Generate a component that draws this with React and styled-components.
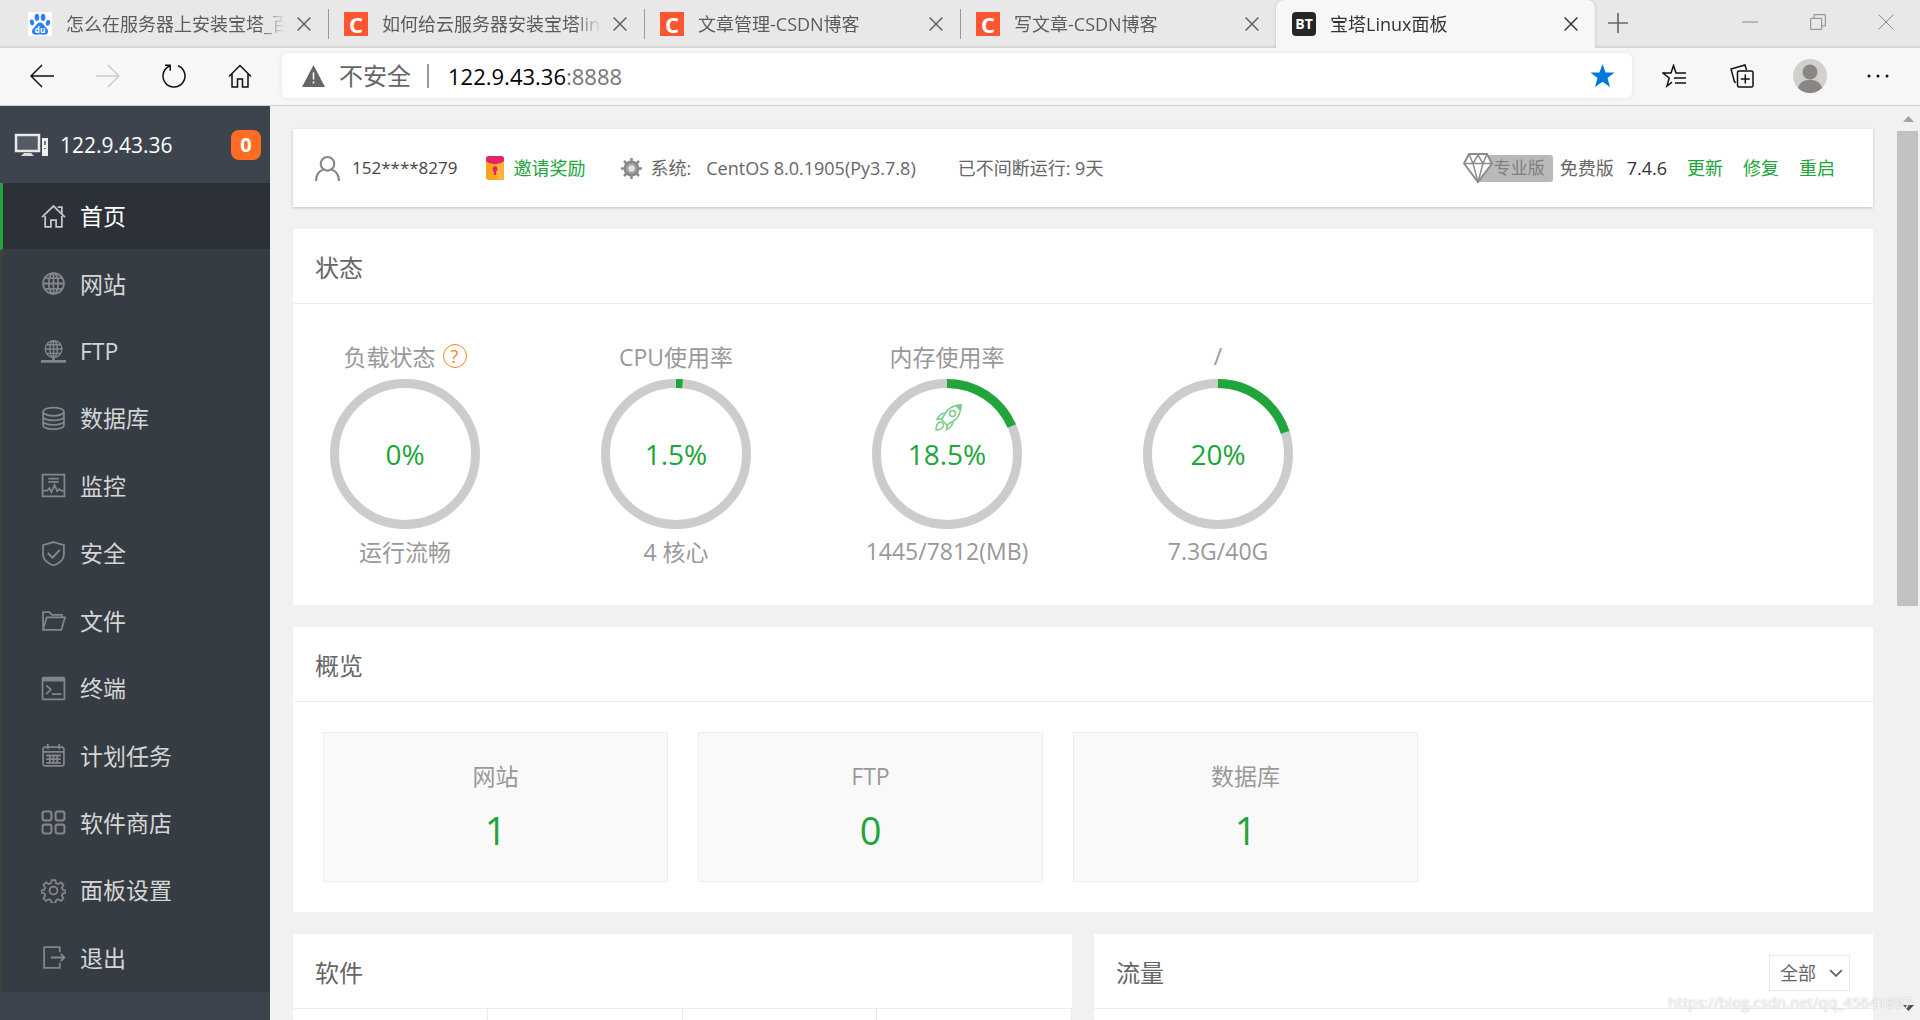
import React from "react";
import styled, {createGlobalStyle} from "styled-components";

const GlobalStyle = createGlobalStyle`
  * { box-sizing: border-box; }
  body {
    margin: 0;
    overflow: hidden;
    background: #f1f1f1;
    color: #666;
    font-family: "Open Sans", "Noto Sans CJK SC", sans-serif;
    font-size: 18px;
  }
  button {
    border: 0;
    padding: 0;
    background: none;
    color: inherit;
    font: inherit;
    cursor: pointer;
  }
  a { text-decoration: none; }
  h2, ul { margin: 0; padding: 0; }
  svg { display: block; }
`

/* ---------- browser window ---------- */

const Window = styled.div`
  display: flex;
  flex-direction: column;
  height: 100vh;
`

const TabStrip = styled.div`
  display: flex;
  flex: none;
  height: 48px;
  padding-left: 12px;
  background: #e8e8e8;
  box-shadow: inset 0 -3px 2px -1px #d6d6d6;
`

const Tab = styled.div`
  display: flex;
  align-items: center;
  flex: 0 1 ${props => props.$active ? '319px' : '316px'};
  min-width: 0;
  padding-right: 12px;
  background: ${props => props.$active ? '#f7f7f7' : 'transparent'};
  border-radius: 8px 8px 0 0;
  box-shadow: ${props => props.$active ? '0 0 3px #bbb' : 'none'};
  clip-path: inset(0 -4px 0 -4px);
  color: ${props => props.$active ? '#333' : '#5c5c5c'};
`

const Divider = styled.span`
  flex: none;
  width: 1px;
  height: 30px;
  margin-right: 15px;
  background: ${props => props.$hidden ? 'transparent' : '#999'};
`

const TabTitle = styled.span`
  flex: 1;
  margin-left: 14px;
  white-space: nowrap;
  line-height: 24px;
  mask-image: linear-gradient(to right, #000 86%, transparent 97%);
`

const TabClose = styled.button`
  display: grid;
  place-items: center;
  flex: none;
  width: 24px;
  height: 24px;
`

const Favicon = styled.span`
  display: grid;
  place-items: center;
  flex: none;
  width: 24px;
  height: 24px;
  border-radius: ${props => props.$round ? '4px' : '0'};
  background: ${props => props.$bg};
  color: #fff;
  font-size: ${props => props.$size};
  font-weight: 700;
  line-height: 24px;
`

const NewTab = styled.button`
  display: grid;
  place-items: center;
  width: 46px;
  height: 46px;
`

const WindowButtons = styled.div`
  display: flex;
  margin-left: auto;
  color: #888;
`

const WindowButton = styled.button`
  display: grid;
  place-items: center;
  width: 68px;
  height: 43px;
`

const Toolbar = styled.div`
  display: flex;
  align-items: center;
  flex: none;
  height: 58px;
  padding: 0 8px 2px 9px;
  background: #f7f7f7;
  border-bottom: 1px solid #cfcfcf;
`

const ToolButton = styled.button`
  display: grid;
  place-items: center;
  flex: none;
  width: ${props => props.$wide ? '68px' : '66px'};
  height: 44px;
  color: ${props => props.$off ? '#ccc' : '#111'};
`

const AddressBar = styled.div`
  display: flex;
  align-items: center;
  flex: 1;
  height: 45px;
  margin: 0 8px 0 9px;
  padding: 0 17px 0 20px;
  background: #fff;
  border-radius: 6px;
  box-shadow: 0 0 5px #e4e4e4;
  color: #666;
  font-size: 24px;
  line-height: 32px;
`

const Insecure = styled.span`
  margin-left: 14px;
`

const AddressRule = styled.span`
  width: 2px;
  height: 24px;
  margin: 0 19px 0 16px;
  background: #999;
`

const Url = styled.span`
  flex: 1;
  color: #757575;
  font-size: 22px;

  b {
    color: #000;
    font-weight: 400;
  }
`

/* ---------- panel ---------- */

const Page = styled.div`
  display: flex;
  flex: 1;
  min-height: 0;
`

const Sidebar = styled.aside`
  flex: none;
  width: 270px;
  overflow: hidden;
  background: #3d444d;
`

const Server = styled.div`
  display: flex;
  align-items: center;
  gap: 11px;
  height: 77px;
  padding: 0 9px 0 14px;
  color: #fff;
  font-size: 21px;
`

const Badge = styled.span`
  width: 30px;
  margin-left: auto;
  border-radius: 8px;
  background: #ff6c24;
  font-size: 20px;
  font-weight: 700;
  line-height: 30px;
  text-align: center;
`

const Menu = styled.ul`
  display: grid;
  grid-auto-rows: 1fr;
  height: 809px;
  list-style: none;
  background: #353c43;
`

const MenuItem = styled.li`
  border-left: 3px solid ${props => props.$active ? '#20a53a' : '#403f40'};
  border-bottom: 1px solid #353c43;
  background: ${props => props.$active ? '#2c3138' : '#353c43'};

  a {
    display: flex;
    align-items: center;
    gap: 14px;
    height: 100%;
    padding-left: 38px;
    color: ${props => props.$active ? '#fff' : '#d5d5d5'};
    font-size: 23px;
    line-height: 32px;
  }
  svg { color: ${props => props.$active ? '#c4c6c8' : '#83878b'}; }
`

const Main = styled.main`
  flex: 1;
  min-width: 0;
  overflow: hidden;
  padding: 23px;
`

const InfoBar = styled.header`
  display: flex;
  align-items: center;
  height: 78px;
  margin-bottom: 22px;
  padding: 0 38px 0 22px;
  background: #fff;
  box-shadow: 0 1px 3px rgba(0, 0, 0, .2);
  white-space: nowrap;
  line-height: 24px;

  a { color: #20a53a; }
`

const Account = styled.span`
  margin: 0 28px 0 12px;
  color: #444;
  font-size: 17px;
`

const Invite = styled.a`
  margin: 0 35px 0 10px;
`

const SystemLabel = styled.span`
  margin: 0 15px 0 9px;
`

const SystemName = styled.span`
  margin-right: 42px;
`

const Version = styled.div`
  display: flex;
  align-items: center;
  gap: 20px;
  margin-left: auto;
`

const Edition = styled.span`
  display: flex;
  align-items: center;
  gap: 7px;
`

const ProBadge = styled.span`
  display: flex;
  align-items: center;
  svg { z-index: 1; }
`

const ProLabel = styled.span`
  height: 27px;
  margin-left: -15px;
  padding: 0 8px 0 16px;
  border-radius: 3px;
  background: #b9b9b9;
  color: #808080;
  font-size: 17px;
  line-height: 26px;
`

const VersionNumber = styled.span`
  margin-left: 6px;
  color: #333;
`

const Card = styled.section`
  margin-bottom: ${props => props.$last ? '0' : '22px'};
  background: #fff;
`

const CardHead = styled.div`
  display: flex;
  align-items: center;
  justify-content: space-between;
  height: 75px;
  padding: 4px 23px 0 22px;
  border-bottom: 1px solid #ededed;
`

const CardTitle = styled.h2`
  font-size: 24px;
  font-weight: 400;
  line-height: 32px;
`

const Gauges = styled.div`
  display: flex;
  gap: 121px;
  padding: 30px 37px 31px;
`

const Gauge = styled.div`
  display: flex;
  flex-direction: column;
  align-items: center;
  width: 150px;
  color: #999;
  font-size: 23px;
  white-space: nowrap;
`

const GaugeText = styled.div`
  display: flex;
  align-items: center;
  gap: 7px;
  height: 45px;
  padding-bottom: 2px;
`

const Help = styled.button`
  width: 24px;
  height: 24px;
  border: 1px solid #ff7f1a;
  border-radius: 50%;
  color: #ff7f1a;
  font-size: 18px;
  line-height: 22px;
`

const Ring = styled.div`
  position: relative;
  display: grid;
  place-items: center;
  width: 150px;
  height: 150px;

  > svg, > span { grid-area: 1 / 1; }
`

const Percent = styled.span`
  color: #20a53a;
  font-size: 28px;
`

const RocketButton = styled.button`
  position: absolute;
  top: 25px;
  left: 63px;
`

const Stats = styled.div`
  display: flex;
  gap: 30px;
  padding: 30px;
`

const Stat = styled.a`
  display: flex;
  flex-direction: column;
  align-items: center;
  width: 345px;
  height: 150px;
  padding-top: 26px;
  border: 1px solid #eee;
  background: #f9f9f9;
`

const StatName = styled.span`
  color: #999;
  font-size: 23px;
  line-height: 34px;
`

const StatValue = styled.span`
  margin-top: 9px;
  color: #20a53a;
  font-size: 38px;
  line-height: 56px;
`

const Columns = styled.div`
  display: grid;
  grid-template-columns: 1fr 1fr;
  gap: 22px;
`

const SoftGrid = styled.div`
  display: grid;
  grid-template-columns: repeat(4, 1fr);
`

const SoftCell = styled.div`
  height: 168px;
  border-right: 1px solid #e6e6f4;
  border-bottom: 1px solid #e6e6f4;
`

const Chart = styled.div`
  height: 500px;
`

const SelectBox = styled.div`
  display: grid;
  align-items: center;
  width: 81px;
  height: 36px;
  border: 1px solid #e8e8e8;

  > * { grid-area: 1 / 1; }
  svg {
    justify-self: end;
    margin-right: 6px;
    pointer-events: none;
  }
`

const Select = styled.select`
  appearance: none;
  width: 100%;
  height: 34px;
  padding: 0 10px;
  border: 0;
  background: none;
  color: #666;
  font: inherit;
`

const ScrollBar = styled.div`
  display: flex;
  flex-direction: column;
  flex: none;
  width: 24px;
  background: #f1f1f1;
`

const ScrollArrow = styled.button`
  display: grid;
  place-items: center;
  height: 25px;
  color: ${props => props.$dark ? '#505050' : '#a3a3a3'};
`

const ScrollTrack = styled.div`
  flex: 1;
  padding: 0 2px 0 1px;
`

const ScrollThumb = styled.div`
  height: 55%;
  background: #c1c1c1;
`

const Watermark = styled.span`
  position: fixed;
  right: 8px;
  bottom: 6px;
  color: #f2f2f2;
  font-size: 15px;
  line-height: 24px;
  text-shadow: 0 0 2px #bbb;
  pointer-events: none;
`

/* ---------- icons ---------- */

const Icon = ({size = 24, width = 1.5, children}) => (
  <svg width={size} height={size} viewBox="0 0 24 24" fill="none" stroke="currentColor" strokeWidth={width} aria-hidden="true">
    {children}
  </svg>
)

const CrossIcon = ({size = 14, width = 2.4}) => (
  <Icon size={size} width={width}><path d="M1 1l22 22M23 1L1 23"/></Icon>
)

const BaiduIcon = () => (
  <svg width="24" height="24" viewBox="0 0 24 24" fill="#2b80ff">
    <ellipse cx="8.9" cy="5.3" rx="2.3" ry="3.6"/>
    <ellipse cx="15.1" cy="5.3" rx="2.3" ry="3.6"/>
    <ellipse cx="4" cy="10.4" rx="2.1" ry="3" transform="rotate(-15 4 10.4)"/>
    <ellipse cx="20" cy="10.8" rx="2.1" ry="3" transform="rotate(15 20 10.8)"/>
    <path d="M12 10.5c2.4 0 3.4 2.2 5 4 1.7 1.7 3.4 3 3 5.5-.4 2.3-2.3 3-4.500 2.700-2.400-.3-4.600-.3-7 0-2.300.3-4.200-.5-4.500-2.700-.3-2.500 1.400-3.800 3-5.500 1.700-1.800 2.600-4 5-4z"/>
    <text x="12" y="21" fill="#fff" fontSize="8" fontWeight="700" textAnchor="middle">du</text>
  </svg>
)

const globe = (
  <>
    <ellipse cx="12" cy="12" rx="4.5" ry="10"/>
    <path d="M12 2v20M2 12h20M3.8 6.800h16.400M3.800 17.200h16.400"/>
  </>
)

const menu = [
  {name: '首页', icon: <><path d="M1 12.500L12 2l11 10.500"/><path d="M4 11.500V22h5.500v-6.500h5V22H20V11.500M16 3h4v6"/></>},
  {name: '网站', icon: <><circle cx="12" cy="12" r="10"/>{globe}</>},
  {name: 'FTP', icon: <><g transform="translate(2.500 0) scale(.8)"><circle cx="12" cy="12" r="10"/>{globe}</g><path d="M0 21.500h24M9 21.500h6M12 18v3" strokeWidth="2.500"/></>},
  {name: '数据库', icon: <><ellipse cx="12" cy="5.500" rx="10" ry="4"/><path d="M2 5.500v13c0 5 20 5 20 0v-13M2 10c0 5 20 5 20 0M2 14.300c0 5 20 5 20 0"/></>},
  {name: '监控', icon: <><path d="M1.500 1.500h21v21h-21zM7 5.500h10M7 8.500h10"/><path d="M2 17h4l2-2.500 2 4 3-7 2.500 6 2-2 2 1.500h3"/></>},
  {name: '安全', icon: <><path d="M12 1l10 3v9c0 5-4.500 8.500-10 10.500C6.500 21.500 2 18 2 13V4z"/><path d="M6.500 11.500l4.500 4.500 7-7.500" strokeWidth="2"/></>},
  {name: '文件', icon: <path d="M2 21V4h6l2.500 2.500h9.500V9M2 21l3.500-12h17.500l-3.500 12z"/>},
  {name: '终端', icon: <><rect x="1.500" y="1.500" width="21" height="21" rx="1"/><path d="M2 3.500h20" strokeWidth="3.500"/><path d="M5 9l4.500 4-4.500 4.500M10.500 17.500h9"/></>},
  {name: '计划任务', icon: <><rect x="2" y="4" width="20" height="18" rx="2"/><path d="M6.500 1v5M17.500 1v5M2 8.500h20M5 12h14M5 15.500h14M5 19h14M8.500 11v9M12 11v9M15.500 11v9"/></>},
  {name: '软件商店', icon: <g strokeWidth="2"><rect x="1.500" y="1.500" width="8.500" height="8.500" rx="2"/><rect x="14" y="1.500" width="8.500" height="8.500" rx="2"/><rect x="1.500" y="14" width="8.500" height="8.500" rx="2"/><rect x="14" y="14" width="8.500" height="8.500" rx="2"/></g>},
  {name: '面板设置', icon: <><circle cx="12" cy="12" r="3.800"/><path d="M10.300 2h3.400l.8 3 2 .8 2.700-1.600 2.400 2.400-1.600 2.700.8 2 3 .8v2l-3 .8-.8 2 1.600 2.700-2.400 2.400-2.700-1.600-2 .8-.8 2.900h-3.400l-.8-2.900-2-.8-2.700 1.600-2.400-2.400L4 16.900l-.8-2-2.700-.8v-2l2.700-.8.8-2-1.600-2.700 2.400-2.400 2.700 1.600 2-.8z"/></>},
  {name: '退出', icon: <path d="M18 7V2H3v20h15v-5M9.500 12h13M19 8.500l3.500 3.500-3.500 3.500"/>},
]

const tabs = [
  {title: '怎么在服务器上安装宝塔_百', icon: <Favicon $bg="#fff"><BaiduIcon/></Favicon>},
  {title: '如何给云服务器安装宝塔lin', icon: <Favicon $bg="#fc5531" $size="22px">C</Favicon>, line: true},
  {title: '文章管理-CSDN博客', icon: <Favicon $bg="#fc5531" $size="22px">C</Favicon>, line: true},
  {title: '写文章-CSDN博客', icon: <Favicon $bg="#fc5531" $size="22px">C</Favicon>, line: true},
  {title: '宝塔Linux面板', icon: <Favicon $bg="#262626" $size="14px" $round>BT</Favicon>, active: true},
]

const gauges = [
  {name: '负载状态', value: 0, note: '运行流畅', help: true},
  {name: 'CPU使用率', value: 1.5, note: '4 核心'},
  {name: '内存使用率', value: 18.5, note: '1445/7812(MB)', rocket: true},
  {name: '/', value: 20, note: '7.3G/40G'},
]

const stats = [
  {name: '网站', value: 1},
  {name: 'FTP', value: 0},
  {name: '数据库', value: 1},
]

const Rocket = () => (
  <svg width="27" height="27" viewBox="0 0 27 27" fill="none" stroke="#7ccb8b" strokeWidth="1.500">
    <path d="M26 1c-7 0-12 2.500-15.500 8L6.500 15.500l5.500 5.500 6.500-4C24 13.500 26 8 26 1z"/>
    <path d="M21 1.800L26 1l-.8 5z" fill="#7ccb8b"/>
    <circle cx="17.500" cy="9.500" r="3"/>
    <path d="M10.500 9C6 9 4 11 2 15.500l5-1M18 17c0 4-2 6.500-6.500 8.500l1-5"/>
    <path d="M1 26c0-4 1-6.500 3.500-8 2.500-.5 4.500 1.500 4 4C7.500 24.500 5 26 1 26z"/>
  </svg>
)

const GaugeRing = ({value}) => (
  <svg width="150" height="150" viewBox="0 0 150 150" fill="none" strokeWidth="9">
    <circle cx="75" cy="75" r="70.500" stroke="#ccc"/>
    {value > 0 &&
      <circle
        cx="75"
        cy="75"
        r="70.500"
        stroke="#20a53a"
        pathLength="100"
        strokeDasharray={`${value} 100`}
        transform="rotate(-90 75 75)"
      />
    }
  </svg>
)

const Browser = () => (
  <>
    <TabStrip>
      {tabs.map(tab => (
        <Tab key={tab.title} $active={tab.active}>
          <Divider $hidden={!tab.line}/>
          {tab.icon}
          <TabTitle>{tab.title}</TabTitle>
          <TabClose aria-label="关闭标签页"><CrossIcon/></TabClose>
        </Tab>
      ))}
      <NewTab aria-label="新建标签页">
        <Icon size={20} width={2}><path d="M12 0v24M0 12h24"/></Icon>
      </NewTab>
      <WindowButtons>
        <WindowButton aria-label="最小化"><Icon size={16}><path d="M0 12h24"/></Icon></WindowButton>
        <WindowButton aria-label="还原"><Icon size={16}><path d="M1 6.500h16.500V23H1zM6 6V1h17v17h-5"/></Icon></WindowButton>
        <WindowButton aria-label="关闭"><CrossIcon size={16} width={1.5}/></WindowButton>
      </WindowButtons>
    </TabStrip>
    <Toolbar>
      <ToolButton aria-label="后退"><Icon><path d="M24 12H1M12 1L1 12l11 11"/></Icon></ToolButton>
      <ToolButton aria-label="前进" $off><Icon><path d="M0 12h23M12 1l11 11-11 11"/></Icon></ToolButton>
      <ToolButton aria-label="刷新"><Icon><path d="M16 1.800a11 11 0 1 1-8.500.2M3 1.200h5.200v5.500"/></Icon></ToolButton>
      <ToolButton aria-label="主页"><Icon><path d="M1 12.500L12 1.500l11 11M4 10v13h5.500v-8h5v8H20V10"/></Icon></ToolButton>
      <AddressBar>
        <svg width="23" height="22" viewBox="0 0 23 22">
          <path d="M11.500 0L23 22H0z" fill="#666"/>
          <path d="M11.500 7.500v7M11.500 16.500v2" stroke="#fff" strokeWidth="1.500"/>
        </svg>
        <Insecure>不安全</Insecure>
        <AddressRule/>
        <Url><b>122.9.43.36</b>:8888</Url>
        <button aria-label="收藏">
          <svg width="25" height="24" viewBox="0 0 24 24" fill="#0078d7">
            <path d="M12 0l3.100 8.500H24l-7 5.600L19.500 23 12 17.800 4.500 23 7 14.100 0 8.500h8.900z"/>
          </svg>
        </button>
      </AddressBar>
      <ToolButton aria-label="收藏夹" $wide>
        <Icon><path d="M18 9h-4L11.500 1.500 9 9H1l6.200 5L5 22l5-3.800M14 9h10M12 14h12M13 19h11"/></Icon>
      </ToolButton>
      <ToolButton aria-label="集锦" $wide>
        <Icon><rect x="7.500" y="7" width="15.500" height="16" rx="1.500"/><path d="M15.300 10.500v9M10.800 15h9M6 18.500L4.500 18 1 5l14-4 1.500 5"/></Icon>
      </ToolButton>
      <ToolButton aria-label="用户" $wide>
        <svg width="34" height="34" viewBox="0 0 34 34">
          <circle cx="17" cy="17" r="17" fill="#d2d0ce"/>
          <circle cx="17" cy="13" r="7.500" fill="#8a8684"/>
          <path d="M5 29c2-11 22-11 24 0a17 17 0 0 1-24 0z" fill="#8a8684"/>
        </svg>
      </ToolButton>
      <ToolButton aria-label="更多" $wide>
        <Icon><g fill="currentColor" stroke="none"><circle cx="3" cy="12" r="1.500"/><circle cx="12" cy="12" r="1.500"/><circle cx="21" cy="12" r="1.500"/></g></Icon>
      </ToolButton>
    </Toolbar>
  </>
)

const SideNav = () => (
  <Sidebar>
    <Server>
      <svg width="35" height="24" viewBox="0 0 35 24">
        <rect x="2" y="2" width="23" height="16" fill="#555b64" stroke="#e8e8e8" strokeWidth="2.500"/>
        <path d="M10 20h7l3 3H7z" fill="#ddd"/>
        <rect x="28" y="5" width="6" height="18" fill="#eee"/>
        <path d="M31 8v4M31 15v1" stroke="#777" strokeWidth="2"/>
      </svg>
      <span>122.9.43.36</span>
      <Badge>0</Badge>
    </Server>
    <nav>
      <Menu>
        {menu.map((item, index) => (
          <MenuItem key={item.name} $active={index === 0}>
            <a href="#"><Icon size={25} width={1.7}>{item.icon}</Icon>{item.name}</a>
          </MenuItem>
        ))}
      </Menu>
    </nav>
  </Sidebar>
)

const Info = () => (
  <InfoBar>
    <Icon size={25} width={2}><g stroke="#888"><circle cx="12" cy="7.500" r="6.500"/><path d="M1 24c0-6 3-9.500 7-11M23 24c0-6-3-9.500-7-11"/></g></Icon>
    <Account>152****8279</Account>
    <svg width="18" height="24" viewBox="0 0 18 24">
      <rect width="18" height="24" rx="3" fill="#f8a51b"/>
      <path d="M11 24V7l7-2v19z" fill="#fbb040"/>
      <path d="M0 5V3q0-3 3-3h12q3 0 3 3v2c-4 4-14 4-18 0z" fill="#e6216b"/>
      <circle cx="9" cy="13" r="2.500" fill="#e6216b"/>
      <path d="M9 14v5" stroke="#e6216b" strokeWidth="2"/>
    </svg>
    <Invite href="#">邀请奖励</Invite>
    <svg width="21" height="21" viewBox="0 0 21 21" stroke="#8a8a8a" fill="none">
      <circle cx="10.500" cy="10.500" r="6.500" strokeWidth="3"/>
      <path d="M10.500 0v7M10.500 14v7M0 10.500h7M14 10.500h7M3 3l5 5M13 13l5 5M3 18l5-5M13 8l5-5" strokeWidth="2.500"/>
      <circle cx="10.500" cy="10.500" r="4" stroke="#aaa" fill="#e4e4e4" strokeWidth="2"/>
    </svg>
    <SystemLabel>系统:</SystemLabel>
    <SystemName>CentOS 8.0.1905(Py3.7.8)</SystemName>
    <span>已不间断运行: 9天</span>
    <Version>
      <Edition>
        <ProBadge>
          <svg width="30" height="30" viewBox="0 0 30 30" fill="#fff" stroke="#8c8c8c" strokeWidth="2">
            <path d="M6 1h18l5 9.500L15 29 1 10.500z"/>
            <path d="M1 10.500h28M6 1l4 9.500L15 29l5-18.500L24 1M10 10.500L15 2l5 8.500" fill="none" strokeWidth="1.500"/>
          </svg>
          <ProLabel>专业版</ProLabel>
        </ProBadge>
        <span>免费版</span>
        <VersionNumber>7.4.6</VersionNumber>
      </Edition>
      <a href="#">更新</a>
      <a href="#">修复</a>
      <a href="#">重启</a>
    </Version>
  </InfoBar>
)

class App extends React.Component {
  render() {
    return (
      <Window>
        <GlobalStyle/>
        <Browser/>
        <Page>
          <SideNav/>
          <Main>
            <Info/>
            <Card>
              <CardHead><CardTitle>状态</CardTitle></CardHead>
              <Gauges>
                {gauges.map(gauge => (
                  <Gauge key={gauge.name}>
                    <GaugeText>
                      {gauge.name}
                      {gauge.help && <Help aria-label="帮助">?</Help>}
                    </GaugeText>
                    <Ring>
                      <GaugeRing value={gauge.value}/>
                      <Percent>{gauge.value}%</Percent>
                      {gauge.rocket && <RocketButton aria-label="释放内存"><Rocket/></RocketButton>}
                    </Ring>
                    <GaugeText>{gauge.note}</GaugeText>
                  </Gauge>
                ))}
              </Gauges>
            </Card>
            <Card>
              <CardHead><CardTitle>概览</CardTitle></CardHead>
              <Stats>
                {stats.map(stat => (
                  <Stat key={stat.name} href="#">
                    <StatName>{stat.name}</StatName>
                    <StatValue>{stat.value}</StatValue>
                  </Stat>
                ))}
              </Stats>
            </Card>
            <Columns>
              <Card $last>
                <CardHead><CardTitle>软件</CardTitle></CardHead>
                <SoftGrid>
                  <SoftCell/>
                  <SoftCell/>
                  <SoftCell/>
                  <SoftCell/>
                </SoftGrid>
              </Card>
              <Card $last>
                <CardHead>
                  <CardTitle>流量</CardTitle>
                  <SelectBox>
                    <Select aria-label="网卡" defaultValue="all">
                      <option value="all">全部</option>
                    </Select>
                    <Icon size={14} width={3}><path d="M2 7l10 10L22 7"/></Icon>
                  </SelectBox>
                </CardHead>
                <Chart/>
              </Card>
            </Columns>
          </Main>
          <ScrollBar>
            <ScrollArrow aria-label="向上滚动">
              <svg width="11" height="6" viewBox="0 0 11 6" fill="currentColor"><path d="M0 6l5.500-6L11 6z"/></svg>
            </ScrollArrow>
            <ScrollTrack><ScrollThumb/></ScrollTrack>
            <ScrollArrow aria-label="向下滚动" $dark>
              <svg width="11" height="6" viewBox="0 0 11 6" fill="currentColor"><path d="M0 0l5.500 6L11 0z"/></svg>
            </ScrollArrow>
          </ScrollBar>
        </Page>
        <Watermark>https://blog.csdn.net/qq_45641897</Watermark>
      </Window>
    );
  }
}

export default App;
